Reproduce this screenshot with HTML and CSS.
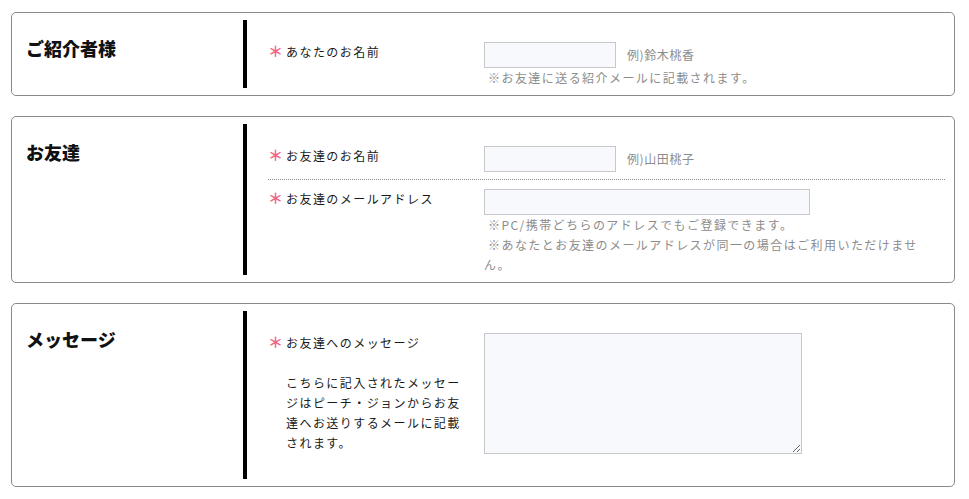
FILE: index.html
```html
<!DOCTYPE html>
<html lang="ja">
<head>
<meta charset="utf-8">
<title>紹介フォーム</title>
<link rel="stylesheet" href="styles.css">
</head>
<body>
<div class="wrap">
  <section class="box">
    <h2 class="box-title">ご紹介者様</h2>
    <div class="box-body">
      <div class="row">
        <div class="label"><span class="req">＊</span>あなたのお名前</div>
        <div class="value">
          <div class="field"><input class="input input-s" type="text"><span class="example">例)鈴木桃香</span></div>
          <p class="note">※お友達に送る紹介メールに記載されます。</p>
        </div>
      </div>
    </div>
  </section>

  <section class="box">
    <h2 class="box-title">お友達</h2>
    <div class="box-body">
      <div class="row">
        <div class="label"><span class="req">＊</span>お友達のお名前</div>
        <div class="value">
          <div class="field"><input class="input input-s" type="text"><span class="example">例)山田桃子</span></div>
        </div>
      </div>
      <div class="row">
        <div class="label"><span class="req">＊</span>お友達のメールアドレス</div>
        <div class="value">
          <div class="field"><input class="input input-l" type="text"></div>
          <p class="note">※PC/携帯どちらのアドレスでもご登録できます。</p>
          <p class="note">※あなたとお友達のメールアドレスが同一の場合はご利用いただけません。</p>
        </div>
      </div>
    </div>
  </section>

  <section class="box">
    <h2 class="box-title">メッセージ</h2>
    <div class="box-body">
      <div class="row row-msg">
        <div class="label">
          <span class="req">＊</span>お友達へのメッセージ
          <p class="desc">こちらに記入されたメッセージはピーチ・ジョンからお友達へお送りするメールに記載されます。</p>
        </div>
        <div class="value">
          <textarea class="textarea"></textarea>
        </div>
      </div>
    </div>
  </section>
</div>
</body>
</html>
```

FILE: styles.css
```css
* { box-sizing: border-box; }

html, body {
  margin: 0;
  padding: 0;
  background: #fff;
}

body {
  font-family: "Noto Sans CJK JP", "Noto Sans", sans-serif;
  color: #222;
  font-size: 12px;
  line-height: 20px;
}

.wrap {
  width: 944px;
  margin: 12px 0 0 11px;
  display: flex;
  flex-direction: column;
  gap: 20px;
}

.box {
  display: flex;
  border: 1px solid #8a8a8a;
  border-radius: 5px;
  background: #fff;
}

.box-title {
  width: 231px;
  flex: none;
  margin: 0;
  padding: 22px 0 0 14px;
  font-size: 18px;
  line-height: 27px;
  font-weight: 900;
  color: #111;
  letter-spacing: 0;
}

.box-body {
  flex: 1;
  margin: 7px 0;
  border-left: 4px solid #000;
  padding: 13px 9px 0 21px;
}

.row {
  display: flex;
  padding: 9px 0 7px;
}

.row:last-child { padding-bottom: 0; }

.row + .row {
  border-top: 1px dotted #8a8a8a;
}

.row-msg.row:last-child { padding-bottom: 25px; }

.label {
  width: 216px;
  flex: none;
  padding: 0 18px 0 18px;
  position: relative;
  letter-spacing: 0.12em;
  color: #1a1a1a;
}

.req {
  position: absolute;
  left: 0;
  top: -1px;
  width: 14px;
  text-align: center;
  color: #f2648a;
  font-weight: 700;
  font-size: 15px;
  letter-spacing: 0;
}

.desc {
  margin: 20px 0 0;
}

.value {
  width: 440px;
}

.field {
  display: flex;
  align-items: center;
  gap: 11px;
}

.input {
  height: 26px;
  border: 1px solid #c8c8cc;
  background: #f8f9fd;
  margin: 0;
  padding: 0 4px;
  border-radius: 0;
  font: inherit;
}

.input-s { width: 132px; }
.input-l { width: 326px; }

.example {
  color: #8c8c8c;
  letter-spacing: 0.05em;
}

.note {
  margin: 0;
  color: #8c8c8c;
  letter-spacing: 0.12em;
  text-indent: 4px;
}

.textarea {
  display: block;
  width: 318px;
  height: 121px;
  margin: 0;
  border: 1px solid #c8c8cc;
  background: #f8f9fd;
  border-radius: 0;
  font: inherit;
}
```
